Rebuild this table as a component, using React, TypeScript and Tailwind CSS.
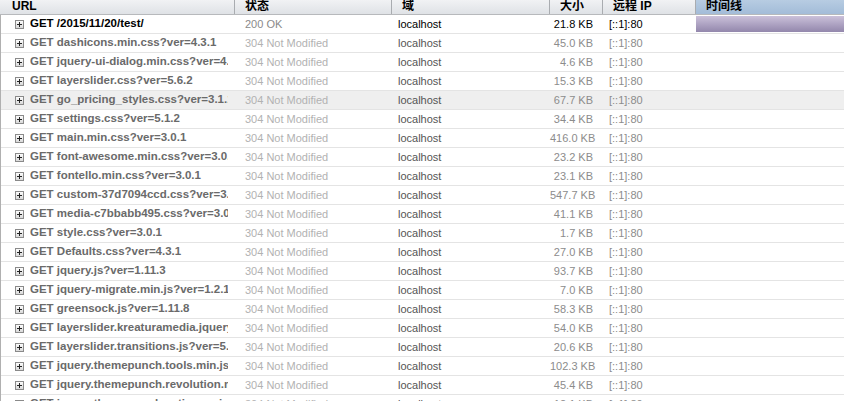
import React from "react";

type Row = { url: string; status: string; size: string; first?: boolean; hl?: boolean };

const rows: Row[] = [
  { url: "GET /2015/11/20/test/", status: "200 OK", size: "21.8 KB", first: true },
  { url: "GET dashicons.min.css?ver=4.3.1", status: "304 Not Modified", size: "45.0 KB" },
  { url: "GET jquery-ui-dialog.min.css?ver=4.3.1", status: "304 Not Modified", size: "4.6 KB" },
  { url: "GET layerslider.css?ver=5.6.2", status: "304 Not Modified", size: "15.3 KB" },
  { url: "GET go_pricing_styles.css?ver=3.1.1", status: "304 Not Modified", size: "67.7 KB", hl: true },
  { url: "GET settings.css?ver=5.1.2", status: "304 Not Modified", size: "34.4 KB" },
  { url: "GET main.min.css?ver=3.0.1", status: "304 Not Modified", size: "416.0 KB" },
  { url: "GET font-awesome.min.css?ver=3.0.1", status: "304 Not Modified", size: "23.2 KB" },
  { url: "GET fontello.min.css?ver=3.0.1", status: "304 Not Modified", size: "23.1 KB" },
  { url: "GET custom-37d7094ccd.css?ver=3.0.1", status: "304 Not Modified", size: "547.7 KB" },
  { url: "GET media-c7bbabb495.css?ver=3.0.1", status: "304 Not Modified", size: "41.1 KB" },
  { url: "GET style.css?ver=3.0.1", status: "304 Not Modified", size: "1.7 KB" },
  { url: "GET Defaults.css?ver=4.3.1", status: "304 Not Modified", size: "27.0 KB" },
  { url: "GET jquery.js?ver=1.11.3", status: "304 Not Modified", size: "93.7 KB" },
  { url: "GET jquery-migrate.min.js?ver=1.2.1", status: "304 Not Modified", size: "7.0 KB" },
  { url: "GET greensock.js?ver=1.11.8", status: "304 Not Modified", size: "58.3 KB" },
  { url: "GET layerslider.kreaturamedia.jquery.js?ver=5.6.2", status: "304 Not Modified", size: "54.0 KB" },
  { url: "GET layerslider.transitions.js?ver=5.6.2", status: "304 Not Modified", size: "20.6 KB" },
  { url: "GET jquery.themepunch.tools.min.js?ver=5.1.2", status: "304 Not Modified", size: "102.3 KB" },
  { url: "GET jquery.themepunch.revolution.min.js?ver=5.1.2", status: "304 Not Modified", size: "45.4 KB" },
  { url: "GET jquery.themepunch.actions.min.js?ver=5.1.2", status: "304 Not Modified", size: "12.1 KB" },
];

function PlusBox() {
  return (
    <svg width="9" height="9" viewBox="0 0 9 9" className="shrink-0">
      <defs>
        <linearGradient id="pb" x1="0" y1="0" x2="0" y2="1">
          <stop offset="0" stopColor="#ffffff" />
          <stop offset="1" stopColor="#d6d6d6" />
        </linearGradient>
      </defs>
      <rect x="0.5" y="0.5" width="8" height="8" fill="url(#pb)" stroke="#8a8a8a" />
      <rect x="2" y="4" width="5" height="1" fill="#222" />
      <rect x="4" y="2" width="1" height="5" fill="#222" />
    </svg>
  );
}

const font = { fontFamily: '"Liberation Sans", "Noto Sans CJK SC", Arial, sans-serif' };

export default function App() {
  return (
    <div className="w-[844px] h-[401px] overflow-hidden bg-white text-[11px]" style={font}>
      <div className="flex h-[15px] border-b border-[#b7b9bc] bg-gradient-to-b from-[#f1f2f4] to-[#dfe2e6] font-bold text-[12px] leading-[13px] text-black">
        <div className="w-[235px] shrink-0 pl-[12px] border-r border-[#a9acb0]">URL</div>
        <div className="w-[157px] shrink-0 pl-[10px] border-r border-[#a9acb0]">状态</div>
        <div className="w-[158px] shrink-0 pl-[10px] border-r border-[#a9acb0]">域</div>
        <div className="w-[53px] shrink-0 pl-[10px] border-r border-[#a9acb0]">大小</div>
        <div className="w-[93px] shrink-0 pl-[10px] border-r border-[#a9acb0]">远程 IP</div>
        <div className="flex-1 pl-[10px] bg-gradient-to-b from-[#b7cce2] to-[#a3bcd8]">时间线</div>
      </div>
      <div className="border-l border-[#b0b0b0]">
        {rows.map((r, i) => (
          <div
            key={i}
            className={`flex h-[19px] items-center border-b border-[#e4e4e4] ${r.hl ? "bg-[#efefef]" : ""}`}
          >
            <div className="w-[234px] shrink-0 flex items-center pl-[14px] pr-[7px] overflow-hidden">
              <PlusBox />
              <div
                className={`ml-[6px] min-w-0 flex-1 overflow-hidden whitespace-nowrap font-bold text-[11.5px] ${r.first ? "text-black" : "text-[#6a6a6a]"}`}
              >
                {r.url}
              </div>
            </div>
            <div className={`w-[157px] shrink-0 pl-[10px] whitespace-nowrap ${r.first ? "text-[#8a8a8a]" : "text-[#b2b2b2]"}`}>
              {r.status}
            </div>
            <div className={`w-[158px] shrink-0 pl-[6px] whitespace-nowrap ${r.first ? "text-black" : "text-[#555]"}`}>
              localhost
            </div>
            <div className={`w-[53px] shrink-0 pr-[10px] text-right whitespace-nowrap ${r.first ? "text-black" : "text-[#8c8c8c]"}`}>
              {r.size}
            </div>
            <div className={`w-[93px] shrink-0 pl-[6px] whitespace-nowrap ${r.first ? "text-black" : "text-[#8c8c8c]"}`}>
              [::1]:80
            </div>
            <div className="flex-1 h-full flex items-center">
              {r.first && (
                <div className="w-full h-[16px] bg-gradient-to-b from-[#cbc1da] to-[#9387ac]" />
              )}
            </div>
          </div>
        ))}
      </div>
    </div>
  );
}
